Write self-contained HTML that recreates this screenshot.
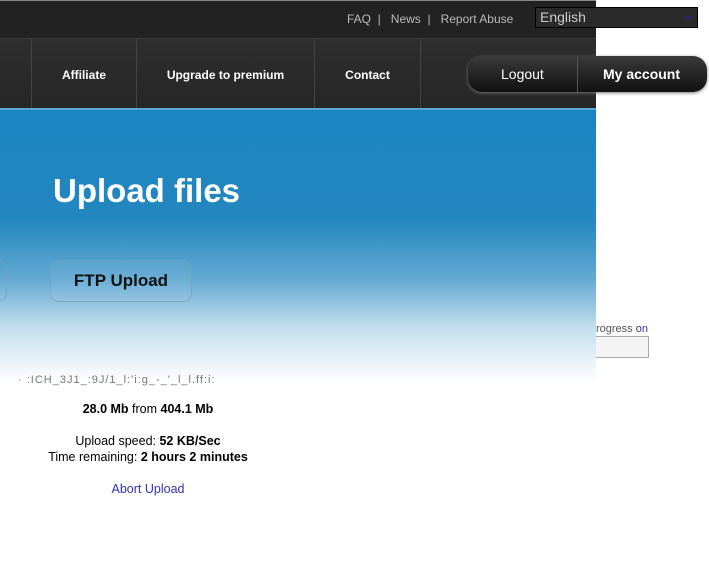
<!DOCTYPE html>
<html><head><style>
body{margin:0;width:709px;height:562px;background:#fff;position:relative;overflow:hidden;font-family:"Liberation Sans",sans-serif;}
.top{position:absolute;left:0;top:0;width:596px;height:38px;background:#222;border-top:1px solid #888;}
.toplinks{position:absolute;top:11px;left:347px;font-size:12px;color:#bbb;}
.lang{position:absolute;left:535px;top:7px;width:163px;height:21px;background:#2a2a2a;border:1px solid #000;color:#ccc;font-size:14px;box-sizing:border-box;padding-left:4px;line-height:18px;}
.lang:after{content:"";position:absolute;right:6px;top:8px;border:3px solid transparent;border-top:4px solid #228;}
.nav{position:absolute;left:0;top:38px;width:596px;height:70px;background:linear-gradient(#2e2e2e,#262626);border-top:1px solid #3a3a3a;}
.nav div{position:absolute;top:0;height:70px;border-left:1px solid #444;color:#fff;font-weight:bold;font-size:12px;line-height:72px;text-align:center;}
.hero{position:absolute;left:0;top:108px;width:596px;height:272px;background:linear-gradient(#1a85c2 0%,#2387bf 40%,#62a9d2 62%,#c3deee 80%,#fff 100%);border-top:2px solid #5ba8d6;}
.hero h1{position:absolute;left:53px;top:62px;margin:0;color:#fff;font-size:33px;}
.ftp{position:absolute;left:50px;top:150px;width:140px;height:40px;border:1px solid rgba(120,160,190,.7);border-radius:9px;text-align:center;line-height:40px;font-weight:bold;font-size:17px;color:#111;background:rgba(255,255,255,.05)}
.ftp0{position:absolute;left:-30px;top:150px;width:35px;height:40px;border:1px solid rgba(120,160,190,.7);border-radius:9px;}
.btns{position:absolute;left:468px;top:56px;width:239px;height:36px;border-radius:14px;background:linear-gradient(#3a3a3a,#111);box-shadow:0 1px 3px #777;color:#fff;font-size:14px;}
.c{position:absolute;font-size:12.5px;color:#000;width:296px;text-align:center;}
</style></head><body>
<div class="top"><div class="toplinks">FAQ &nbsp;| &nbsp;&nbsp;News &nbsp;| &nbsp;&nbsp;Report Abuse</div></div>
<div class="lang">English</div>
<div class="nav">
<div style="left:-30px;width:60px;border:none"></div>
<div style="left:31px;width:104px">Affiliate</div>
<div style="left:136px;width:177px">Upgrade to premium</div>
<div style="left:314px;width:105px">Contact</div>
<div style="left:420px;width:176px"></div>
</div>
<div class="hero"><h1>Upload files</h1><div class="ftp0"></div><div class="ftp">FTP Upload</div></div>
<div class="btns"><span style="position:absolute;left:33px;top:10px">Logout</span><span style="position:absolute;left:109px;top:0;height:36px;border-left:1px solid #555"></span><span style="position:absolute;left:135px;top:10px;font-weight:bold">My account</span></div>
<div style="position:absolute;left:596px;top:323px;font-size:11px;color:#555">rogress <span style="color:#33a">on</span></div>
<div style="position:absolute;left:596px;top:336px;width:52px;height:20px;border:1px solid #aaa;border-left:none;background:#f4f4f4"></div>
<div style="position:absolute;left:18px;top:374px;font-size:11px;color:#777;letter-spacing:1px">· :ICH_3J1_:9J/1_l:'i:g_-_'_l_l.ff:i:</div>
<div class="c" style="left:0;top:402px"><b>28.0 Mb</b> from <b>404.1 Mb</b></div>
<div class="c" style="left:0;top:434px">Upload speed: <b>52 KB/Sec</b></div>
<div class="c" style="left:0;top:450px">Time remaining: <b>2 hours 2 minutes</b></div>
<div class="c" style="left:0;top:482px;color:#33a">Abort Upload</div>
</body></html>
